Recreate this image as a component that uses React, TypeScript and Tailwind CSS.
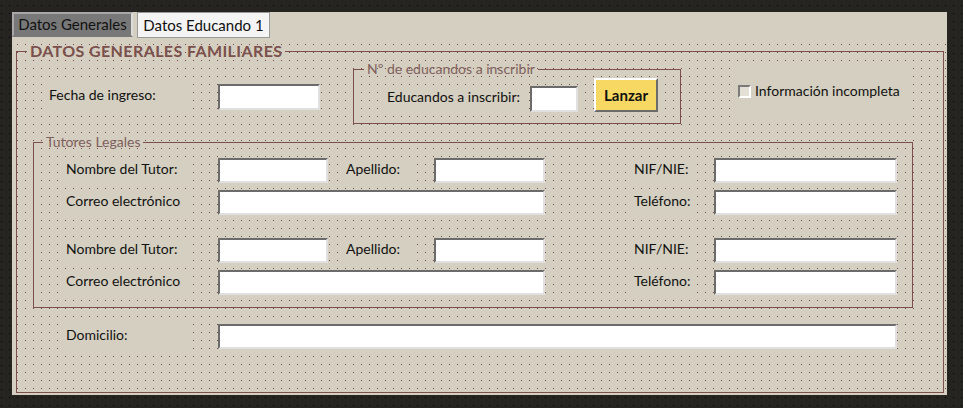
import React from "react";

const INPUT =
  "bg-white border-2 border-t-[#6b6b6b] border-l-[#6b6b6b] border-b-[#e0e0e0] border-r-[#e0e0e0] shrink-0";
const LABEL =
  "bg-[#d4cfc0] pl-[4px] h-[25px] leading-[21px] text-[14px] text-[#111] whitespace-nowrap shrink-0";

function TutorRows({ first }: { first: boolean }) {
  return (
    <>
      <div className={`flex items-start ${first ? "mt-[8px]" : "mt-[23px]"}`}>
        <div className={`${LABEL} ml-[28px] w-[128px]`}>Nombre del Tutor:</div>
        <div className={`${INPUT} ml-[28px] w-[110px] h-[25px]`} />
        <div className={`${LABEL} ml-[14px] w-[70px]`}>Apellido:</div>
        <div className={`${INPUT} ml-[22px] w-[111px] h-[25px]`} />
        <div className={`${LABEL} ml-[85px] w-[60px]`}>NIF/NIE:</div>
        <div className={`${INPUT} ml-[24px] w-[183px] h-[25px]`} />
      </div>
      <div className="flex items-start mt-[7px]">
        <div className={`${LABEL} ml-[28px] w-[128px]`}>Correo electrónico</div>
        <div className={`${INPUT} ml-[28px] w-[327px] h-[25px]`} />
        <div className={`${LABEL} ml-[85px] w-[60px]`}>Teléfono:</div>
        <div className={`${INPUT} ml-[24px] w-[183px] h-[25px]`} />
      </div>
    </>
  );
}

export default function App() {
  return (
    <div className="w-[963px] h-[408px] overflow-hidden pl-[12px] pt-[12px] bg-[image:linear-gradient(to_bottom,transparent_1px,#262420_1px),linear-gradient(to_right,#000000_1px,#262420_1px)] bg-size-[8px_8px] bg-position-[1px_5px] font-['Lato','Liberation_Sans',sans-serif]">
      <div className="w-[935px] h-[383px] bg-[#d4cfc0] flex flex-col">
        {/* tab strip */}
        <div className="h-[26px] flex items-start gap-[4px] shrink-0">
          <div className="w-[121px] h-[25px] bg-[#787878] border-2 border-t-[#a8a8a8] border-l-[#a8a8a8] border-r-[#dcdcdc] border-b-[#787878] flex items-center justify-center text-[15px] text-[#111]">
            Datos Generales
          </div>
          <div className="w-[133px] h-[26px] bg-[#f4f4f4] border border-[#9a9a9a] flex items-center justify-center text-[15px] text-[#111]">
            Datos Educando 1
          </div>
        </div>
        {/* body */}
        <div className="flex-1 pl-[4px] pt-[4px] bg-[image:linear-gradient(to_bottom,transparent_1px,#d4cfc0_1px),linear-gradient(to_right,#7a4848_1px,#d4cfc0_1px)] bg-size-[8px_8px] bg-position-[5px_6px]">
          <fieldset className="w-[928px] h-[351px] border border-[#7d4e4e]">
            <legend className="ml-[10px] px-[3px] text-[16px] leading-[18px] tracking-[0.4px] font-bold text-[#7b504c]">
              DATOS GENERALES FAMILIARES
            </legend>
            {/* row A */}
            <div className="flex items-start h-[64px]">
              <div className={`${LABEL} ml-[28px] mt-[24px] w-[145px] h-[26px]`}>Fecha de ingreso:</div>
              <div className={`${INPUT} ml-[28px] mt-[24px] w-[102px] h-[26px]`} />
              <fieldset className="ml-[33px] mt-[1px] w-[328px] h-[63px] border border-[#7d4e4e] shrink-0">
                <legend className="ml-[10px] px-[3px] text-[14px] leading-[16px] text-[#80605e]">
                  Nº de educandos a inscribir
                </legend>
                <div className="flex items-start">
                  <div className={`${LABEL} ml-[29px] mt-[9px] w-[140px] h-[26px]`}>Educandos a inscribir:</div>
                  <div className={`${INPUT} ml-[7px] mt-[9px] w-[48px] h-[26px]`} />
                  <button className="ml-[16px] mt-[1px] w-[64px] h-[34px] bg-[#f6d862] border-2 border-t-white border-l-white border-b-[#6b6b6b] border-r-[#6b6b6b] text-[15px] font-bold text-[#111] shrink-0">
                    Lanzar
                  </button>
                </div>
              </fieldset>
              <div className="ml-[52px] mt-[6px] w-[180px] h-[52px] bg-[#d4cfc0] pl-[5px] pt-[19px] flex items-start gap-[4px] shrink-0">
                <span className="w-[13px] h-[13px] border-2 border-t-[#7a7a7a] border-l-[#7a7a7a] border-b-white border-r-white bg-[#e4e0d6] shrink-0" />
                <span className="text-[14px] leading-[14px] -mt-[1px] text-[#111] whitespace-nowrap">Información incompleta</span>
              </div>
            </div>
            {/* tutores */}
            <fieldset className="ml-[16px] mt-[10px] w-[880px] h-[174px] border border-[#7d4e4e]">
              <legend className="ml-[9px] px-[3px] text-[14px] leading-[16px] text-[#80605e]">Tutores Legales</legend>
              <TutorRows first />
              <TutorRows first={false} />
            </fieldset>
            {/* domicilio */}
            <div className="flex items-start mt-[16px]">
              <div className={`${LABEL} ml-[45px] w-[128px]`}>Domicilio:</div>
              <div className={`${INPUT} ml-[28px] w-[679px] h-[25px]`} />
            </div>
          </fieldset>
        </div>
      </div>
    </div>
  );
}
